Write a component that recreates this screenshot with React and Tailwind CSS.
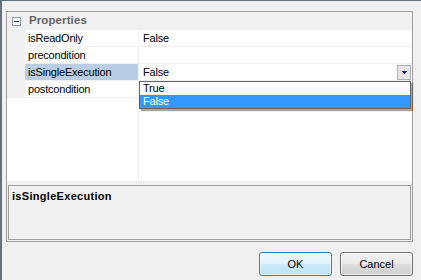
export default function App() {
  const rows = [
    { name: "isReadOnly", value: "False" },
    { name: "precondition", value: "" },
    { name: "isSingleExecution", value: "False", selected: true },
    { name: "postcondition", value: "" },
  ];
  return (
    <div className="w-[421px] h-[280px] bg-[#f0f0f0] border-t border-t-[#66717c] border-l-2 border-l-[#66717c] flex flex-col font-['Liberation_Sans',Arial,sans-serif] text-[11px] text-black overflow-hidden">
      <div className="mt-[10px] ml-[4px] w-[407px] h-[231px] border border-[#a0a0a0] bg-[#f0f0f0] flex flex-col">
        <div className="h-[169px] bg-white flex flex-col">
          <div className="h-[18px] bg-[#f0f0f0] flex items-center">
            <div className="ml-[5px] w-[9px] h-[9px] border border-[#8e9aa8] bg-[#f7f7f7] flex items-center justify-center">
              <div className="w-[5px] h-[1px] bg-[#34445c]" />
            </div>
            <span className="ml-[8px] font-bold text-[#646464] text-[11.5px] tracking-[0.1px] leading-none">Properties</span>
          </div>
          {rows.map((r) => (
            <div key={r.name} className="h-[17px] flex border-b border-[#f0f0f0]">
              <div className="w-[18px] bg-[#f0f0f0]" />
              <div
                className={
                  "w-[113px] pl-[3px] flex items-center tracking-[-0.2px] whitespace-nowrap " +
                  (r.selected ? "bg-[#b9cde5]" : "")
                }
              >
                {r.name}
              </div>
              <div className="w-[1px] bg-[#f0f0f0]" />
              <div className="flex-1 relative flex items-center pl-[4px] tracking-[-0.2px]">
                <span>{r.value}</span>
                {r.selected && (
                  <>
                    <div className="ml-auto mr-[1px] w-[14px] h-[15px] border border-[#a6b4c6] bg-[#e6e6e6] flex items-center justify-center">
                      <svg width="5" height="3" viewBox="0 0 5 3" shapeRendering="crispEdges">
                        <rect x="0" y="0" width="5" height="1" fill="#1a1a7a" />
                        <rect x="1" y="1" width="3" height="1" fill="#1a1a7a" />
                        <rect x="2" y="2" width="1" height="1" fill="#1a1a7a" />
                      </svg>
                    </div>
                    <div className="absolute left-0 top-[17px] w-[272px] h-[28px] z-10 border border-[#646464] bg-white shadow-[2px_2px_1px_rgba(0,0,0,0.35)] flex flex-col tracking-[-0.2px]">
                      <div className="h-[13px] leading-[13px] pl-[3px]">True</div>
                      <div className="h-[13px] leading-[13px] pl-[3px] bg-[#3399ff] text-white">False</div>
                    </div>
                  </>
                )}
              </div>
            </div>
          ))}
          <div className="flex-1 flex">
            <div className="w-[131px]" />
            <div className="w-[1px] bg-[#f0f0f0]" />
            <div className="flex-1" />
          </div>
        </div>
        <div className="h-[4px]" />
        <div className="mx-[1px] h-[55px] border border-[#a0a0a0] bg-[#f0f0f0] pl-[3px] pt-[3px]">
          <div className="font-bold leading-[14px] tracking-[0.3px]">isSingleExecution</div>
        </div>
      </div>
      <div className="mt-[10px] flex justify-end gap-[8px] pr-[8px]">
        <button className="w-[73px] h-[24px] rounded-[3px] border border-[#3c7fb1] bg-[linear-gradient(to_bottom,#ebf7fd_0%,#e0f2fc_48%,#c8e8f8_52%,#bfe3f6_100%)] shadow-[inset_0_0_0_1px_rgba(255,255,255,0.6)] text-[11px] leading-none">
          OK
        </button>
        <button className="w-[73px] h-[24px] rounded-[3px] border border-[#707070] bg-[linear-gradient(to_bottom,#f2f2f2_0%,#ebebeb_48%,#dddddd_52%,#cfcfcf_100%)] shadow-[inset_0_0_0_1px_rgba(255,255,255,0.6)] text-[11px] leading-none">
          Cancel
        </button>
      </div>
    </div>
  );
}
